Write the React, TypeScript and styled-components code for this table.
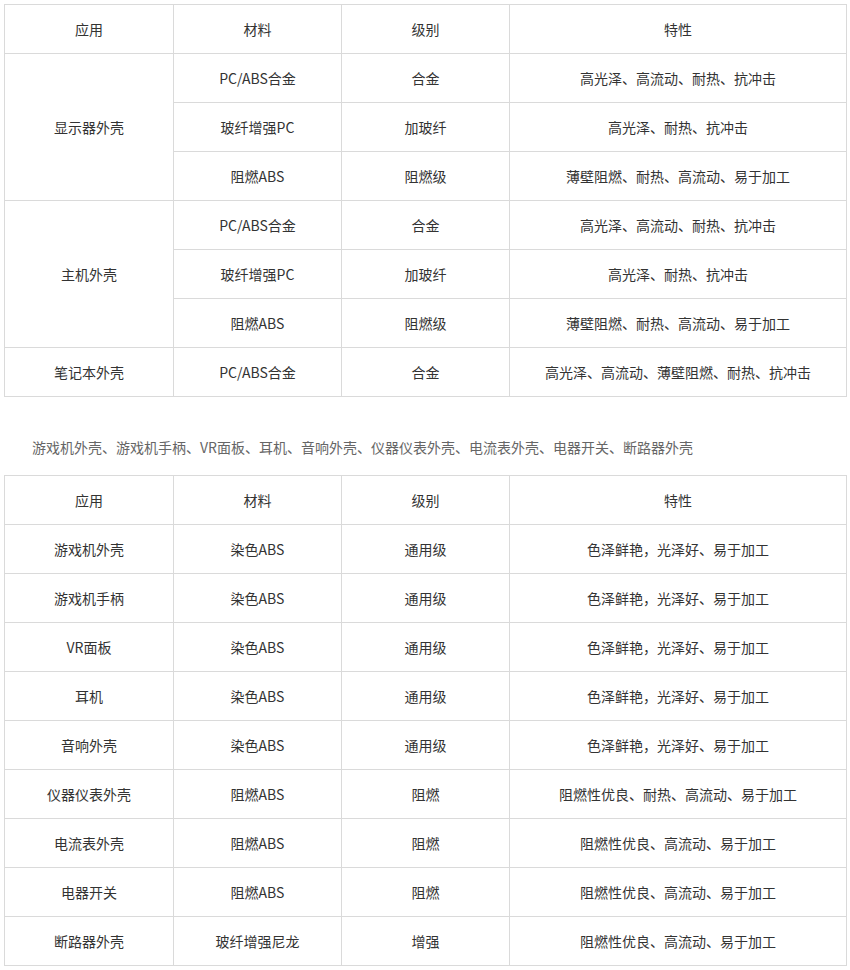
import React from "react";
import styled, { createGlobalStyle } from "styled-components";

const GlobalStyle = createGlobalStyle`
  html, body {
    margin: 0;
    padding: 0;
    background: #fff;
  }
  body {
    font-family: "Microsoft YaHei", "Noto Sans CJK SC", "Noto Sans", sans-serif;
    font-size: 14px;
    color: #333;
  }
`;

const Page = styled.div`
  padding: 4px 4px 0 4px;
  width: 842px;
`;

const Table = styled.table`
  width: 842px;
  border-collapse: collapse;
  table-layout: fixed;
`;

const Cell = styled.td`
  border: 1px solid #dadada;
  height: 48px;
  padding: 0;
  text-align: center;
  vertical-align: middle;
  color: #333;
  line-height: 20px;
`;

const Note = styled.p`
  margin: 38px 0 16px 0;
  line-height: 24px;
  text-indent: 2em;
  color: #666;
`;

const Cols = () => (
  <colgroup>
    <col style={{ width: 169 }} />
    <col style={{ width: 168 }} />
    <col style={{ width: 168 }} />
    <col style={{ width: 337 }} />
  </colgroup>
);

const Head = () => (
  <tr>
    <Cell>应用</Cell>
    <Cell>材料</Cell>
    <Cell>级别</Cell>
    <Cell>特性</Cell>
  </tr>
);

const groups = [
  {
    app: "显示器外壳",
    rows: [
      ["PC/ABS合金", "合金", "高光泽、高流动、耐热、抗冲击"],
      ["玻纤增强PC", "加玻纤", "高光泽、耐热、抗冲击"],
      ["阻燃ABS", "阻燃级", "薄壁阻燃、耐热、高流动、易于加工"],
    ],
  },
  {
    app: "主机外壳",
    rows: [
      ["PC/ABS合金", "合金", "高光泽、高流动、耐热、抗冲击"],
      ["玻纤增强PC", "加玻纤", "高光泽、耐热、抗冲击"],
      ["阻燃ABS", "阻燃级", "薄壁阻燃、耐热、高流动、易于加工"],
    ],
  },
  {
    app: "笔记本外壳",
    rows: [["PC/ABS合金", "合金", "高光泽、高流动、薄壁阻燃、耐热、抗冲击"]],
  },
];

const second = [
  ["游戏机外壳", "染色ABS", "通用级", "色泽鲜艳，光泽好、易于加工"],
  ["游戏机手柄", "染色ABS", "通用级", "色泽鲜艳，光泽好、易于加工"],
  ["VR面板", "染色ABS", "通用级", "色泽鲜艳，光泽好、易于加工"],
  ["耳机", "染色ABS", "通用级", "色泽鲜艳，光泽好、易于加工"],
  ["音响外壳", "染色ABS", "通用级", "色泽鲜艳，光泽好、易于加工"],
  ["仪器仪表外壳", "阻燃ABS", "阻燃", "阻燃性优良、耐热、高流动、易于加工"],
  ["电流表外壳", "阻燃ABS", "阻燃", "阻燃性优良、高流动、易于加工"],
  ["电器开关", "阻燃ABS", "阻燃", "阻燃性优良、高流动、易于加工"],
  ["断路器外壳", "玻纤增强尼龙", "增强", "阻燃性优良、高流动、易于加工"],
];

export default function App() {
  return (
    <>
      <GlobalStyle />
      <Page>
        <Table>
          <Cols />
          <tbody>
            <Head />
            {groups.map((g) =>
              g.rows.map((r, i) => (
                <tr key={g.app + i}>
                  {i === 0 && <Cell rowSpan={g.rows.length}>{g.app}</Cell>}
                  {r.map((c, j) => (
                    <Cell key={j}>{c}</Cell>
                  ))}
                </tr>
              ))
            )}
          </tbody>
        </Table>
        <Note>
          游戏机外壳、游戏机手柄、VR面板、耳机、音响外壳、仪器仪表外壳、电流表外壳、电器开关、断路器外壳
        </Note>
        <Table>
          <Cols />
          <tbody>
            <Head />
            {second.map((r, i) => (
              <tr key={i}>
                {r.map((c, j) => (
                  <Cell key={j}>{c}</Cell>
                ))}
              </tr>
            ))}
          </tbody>
        </Table>
      </Page>
    </>
  );
}
